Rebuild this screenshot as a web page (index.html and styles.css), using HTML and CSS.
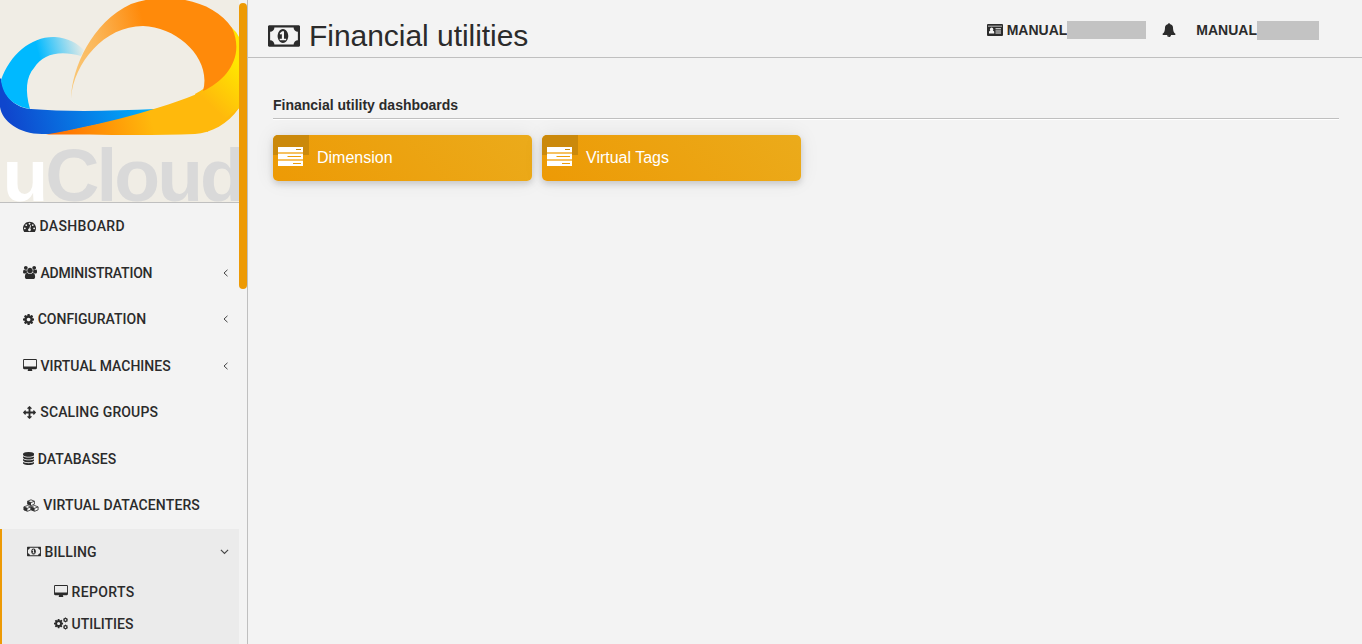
FILE: index.html
```html
<!DOCTYPE html>
<html lang="en">
<head>
<meta charset="utf-8">
<title>Financial utilities</title>
<link rel="stylesheet" href="styles.css">
</head>
<body>
<svg class="defs" width="0" height="0">
  <symbol id="money" viewBox="0 0 1920 1792"><path d="M704 1152h384v-96h-128v-448h-114l-148 137 77 80q42-37 55-57h2v288h-128v96zm512-256q0 70-21 142t-59.5 134-101.5 101-138 39-138-39-101.5-101-59.5-134-21-142 21-142 59.5-134 101.5-101 138-39 138 39 101.5 101 59.5 134 21 142zm576 256v-512q-106 0-181-75t-75-181h-1152q0 106-75 181t-181 75v512q106 0 181 75t75 181h1152q0-106 75-181t181-75zm128-832v1152q0 26-19 45t-45 19h-1792q-26 0-45-19t-19-45v-1152q0-26 19-45t45-19h1792q26 0 45 19t19 45z"/></symbol>
  <symbol id="desktop" viewBox="0 0 1920 1792"><path d="M1792 992v-832q0-13-9.500-22.500t-22.500-9.500h-1600q-13 0-22.500 9.500t-9.500 22.500v832q0 13 9.500 22.500t22.500 9.500h1600q13 0 22.500-9.500t9.500-22.500zm128-832v1088q0 66-47 113t-113 47h-544q0 37 16 77.500t32 71 16 43.500q0 26-19 45t-45 19h-512q-26 0-45-19t-19-45q0-14 16-44t32-70 16-78h-544q-66 0-113-47t-47-113v-1088q0-66 47-113t113-47h1600q66 0 113 47t47 113z"/></symbol>
  <symbol id="cog" viewBox="128 0 1536 1792"><path d="M1152 896q0-106-75-181t-181-75-181 75-75 181 75 181 181 75 181-75 75-181zm512-109v222q0 12-8 23t-20 13l-185 28q-19 54-39 91 35 50 107 138 10 12 10 25t-9 23q-27 37-99 108t-94 71q-12 0-26-9l-138-108q-44 23-91 38-16 136-29 186-7 28-36 28h-222q-14 0-24.500-8.500t-11.500-21.500l-28-184q-49-16-90-37l-141 107q-10 9-25 9-14 0-25-11-126-114-165-168-7-10-7-23 0-12 8-23 15-21 51-66.500t54-70.500q-27-50-41-99l-183-27q-13-2-21-12.500t-8-23.500v-222q0-12 8-23t19-13l186-28q14-46 39-92-40-57-107-138-10-12-10-24 0-10 9-23 26-36 98.500-107.500t94.500-71.500q13 0 26 10l138 107q44-23 91-38 16-136 29-186 7-28 36-28h222q14 0 24.500 8.500t11.500 21.500l28 184q49 16 90 37l142-107q9-9 24-9 13 0 25 10 129 119 165 170 7 8 7 22 0 12-8 23-15 21-51 66.500t-54 70.500q26 50 41 98l183 28q13 2 21 12.500t8 23.500z"/></symbol>
</svg>
<div class="app">
  <aside class="sidebar">
    <div class="logo">
      <svg width="239" height="202" viewBox="0 0 239 202">
        <defs>
          <linearGradient id="sky" gradientUnits="userSpaceOnUse" x1="40" y1="60" x2="85" y2="48"><stop offset="0" stop-color="#00b9ff"/><stop offset="1" stop-color="#f0ede5"/></linearGradient>
          <linearGradient id="blue" gradientUnits="userSpaceOnUse" x1="10" y1="125" x2="140" y2="95"><stop offset="0" stop-color="#0f46cd"/><stop offset="1" stop-color="#00aafa"/></linearGradient>
          <linearGradient id="orange" gradientUnits="userSpaceOnUse" x1="70" y1="80" x2="152" y2="62"><stop offset="0" stop-color="#f9c878"/><stop offset=".4" stop-color="#fbb75a"/><stop offset="1" stop-color="#ff8a0a"/></linearGradient>
          <linearGradient id="gold" gradientUnits="userSpaceOnUse" x1="50" y1="134" x2="150" y2="112"><stop offset="0" stop-color="#ff6a00"/><stop offset="1" stop-color="#ffb90c"/></linearGradient>
          <linearGradient id="yellow" gradientUnits="userSpaceOnUse" x1="205" y1="100" x2="239" y2="65"><stop offset="0" stop-color="#ffb90c"/><stop offset="1" stop-color="#ffe600"/></linearGradient>
        </defs>
        <path fill="url(#blue)" d="M1 78C4 99 17 108 31 109C66 112 112 111 156 109L160 111L54 134H42C19 134 2 121 0 107V79Z"/>
        <path fill="url(#gold)" d="M46 134.500C100 125 160 110 204 91L239 60V108C228 124 211 133 195 134C150 136 90 134.500 46 134.500Z"/>
        <path fill="url(#yellow)" d="M195 94C222 79 237 60 231 27Q236 31 239 37V108L207 132Z"/>
        <path fill="url(#sky)" d="M1 80C10 54 32 36 55 37C68 38 77 43 84 50L81 56C59 50 43 54 34 68C26 77 25 91 30 109C14 106 3 97 1 80Z"/>
        <path fill="url(#orange)" d="M71 98C72 68 92 22 131 4C167-9 214 0 232 28C245 56 227 80 203 91C212 59 178 27 143 26C104 26 74 63 71 98Z"/>
        <text class="logo-text" x="2.500" y="200.700" fill="#d9d9d9"><tspan fill="#fff">u</tspan>Cloud</text>
      </svg>
    </div>
    <nav class="nav">
      <a class="item"><svg class="ic w13" viewBox="0 0 1792 1792"><path d="M384 1152q0-53-37.500-90.500t-90.500-37.500-90.500 37.500-37.500 90.500 37.500 90.500 90.500 37.500 90.500-37.500 37.500-90.500zm192-448q0-53-37.500-90.500t-90.500-37.500-90.500 37.500-37.500 90.500 37.500 90.500 90.500 37.500 90.500-37.500 37.500-90.500zm428 481l101-382q6-26-7.500-48.500t-38.500-29.500-48 6.500-30 39.500l-101 382q-60 5-107 43.500t-63 98.500q-20 77 20 146t117 89 146-20 89-117q16-60-6-117t-72-91zm660-33q0-53-37.500-90.500t-90.500-37.500-90.500 37.500-37.500 90.500 37.500 90.500 90.500 37.500 90.500-37.500 37.500-90.500zm-640-640q0-53-37.500-90.500t-90.500-37.500-90.500 37.500-37.500 90.500 37.500 90.500 90.500 37.500 90.500-37.500 37.500-90.500zm448 192q0-53-37.500-90.500t-90.500-37.500-90.500 37.500-37.500 90.500 37.500 90.500 90.500 37.500 90.500-37.500 37.500-90.500zm320 448q0 261-141 483-19 29-54 29h-1402q-35 0-54-29-141-221-141-483 0-182 71-348t191-286 286-191 348-71 348 71 286 191 191 286 71 348z"/></svg><span class="wide">DASHBOARD</span></a>
      <a class="item"><svg class="ic w14" viewBox="0 0 1920 1792"><path d="M593 896q-162 5-265 128h-134q-82 0-138-40.500t-56-118.500q0-353 124-353 6 0 43.500 21t97.500 42.500 119 21.500q67 0 133-23-5 37-5 66 0 159 93 287zm1071 637q0 120-73 189.500t-194 69.500h-874q-121 0-194-69.500t-73-189.500q0-53 3.500-103.500t14-109 26.500-108.500 43-97.500 62-81 85.500-53.500 111.500-20q10 0 43 21.500t73 48 107 48 135 21.500 135-21.500 107-48 73-48 43-21.500q61 0 111.500 20t85.500 53.500 62 81 43 97.500 26.500 108.500 14 109 3.500 103.500zm-1024-1277q0 106-75 181t-181 75-181-75-75-181 75-181 181-75 181 75 75 181zm704 384q0 159-112.500 271.500t-271.500 112.500-271.500-112.500-112.500-271.500 112.500-271.500 271.500-112.500 271.500 112.500 112.500 271.500zm576 225q0 78-56 118.500t-138 40.500h-134q-103-123-265-128 93-128 93-287 0-29-5-66 66 23 133 23 59 0 119-21.500t97.500-42.500 43.500-21q124 0 124 353zm-128-609q0 106-75 181t-181 75-181-75-75-181 75-181 181-75 181 75 75 181z"/></svg><span class="tight">ADMINISTRATION</span><svg class="chev" viewBox="0 0 8 8"><path d="M5.500 .8L2 4l3.500 3.200"/></svg></a>
      <a class="item"><svg class="ic w11"><use href="#cog"/></svg><span>CONFIGURATION</span><svg class="chev" viewBox="0 0 8 8"><path d="M5.500 .8L2 4l3.500 3.200"/></svg></a>
      <a class="item"><svg class="ic w14"><use href="#desktop"/></svg><span>VIRTUAL MACHINES</span><svg class="chev" viewBox="0 0 8 8"><path d="M5.500 .8L2 4l3.500 3.200"/></svg></a>
      <a class="item"><svg class="ic w13" viewBox="0 0 1792 1792"><path d="M1792 896q0 26-19 45l-256 256q-19 19-45 19t-45-19-19-45v-128h-384v384h128q26 0 45 19t19 45-19 45l-256 256q-19 19-45 19t-45-19l-256-256q-19-19-19-45t19-45 45-19h128v-384h-384v128q0 26-19 45t-45 19-45-19l-256-256q-19-19-19-45t19-45l256-256q19-19 45-19t45 19 19 45v128h384v-384h-128q-26 0-45-19t-19-45 19-45l256-256q19-19 45-19t45 19l256 256q19 19 19 45t-19 45-45 19h-128v384h384v-128q0-26 19-45t45-19 45 19l256 256q19 19 19 45z"/></svg><span class="loose shifted">SCALING GROUPS</span></a>
      <a class="item"><svg class="ic w11" viewBox="128 0 1536 1792"><path d="M896 768q237 0 443-43t325-127v170q0 69-103 128t-280 93.500-385 34.500-385-34.500-280-93.500-103-128v-170q119 84 325 127t443 43zm0 768q237 0 443-43t325-127v170q0 69-103 128t-280 93.500-385 34.500-385-34.500-280-93.500-103-128v-170q119 84 325 127t443 43zm0-384q237 0 443-43t325-127v170q0 69-103 128t-280 93.500-385 34.500-385-34.500-280-93.500-103-128v-170q119 84 325 127t443 43zm0-1152q208 0 385 34.500t280 93.500 103 128v128q0 69-103 128t-280 93.500-385 34.500-385-34.500-280-93.500-103-128v-128q0-69 103-128t280-93.500 385-34.500z"/></svg><span class="loose">DATABASES</span></a>
      <a class="item"><svg class="ic w16" viewBox="0 0 16 13">
        <path class="line" d="M4.600 2.200L8 .8l3.400 1.400v3L8 6.600 4.600 5.200ZM4.600 2.200L8 3.600l3.400-1.400M.9 7.900l3.500-1.400 3.500 1.400v3l-3.500 1.400L.9 10.900ZM.9 7.900l3.500 1.400 3.500-1.400M8.100 7.900l3.500-1.400 3.500 1.400v3l-3.500 1.400-3.500-1.400ZM8.100 7.900l3.500 1.400 3.500-1.400"/>
        <path d="M4.600 2.200L8 3.600v3L4.600 5.200ZM.9 7.900l3.500 1.400v3L.9 10.900ZM8.100 7.900l3.500 1.400v3l-3.500-1.400Z"/></svg><span class="loose shifted">VIRTUAL DATACENTERS</span></a>
      <div class="group">
        <a class="item"><svg class="ic w14"><use href="#money"/></svg><span class="loose">BILLING</span><svg class="chev down" viewBox="0 0 8 8"><path d="M.8 2.500L4 5.700l3.200-3.200"/></svg></a>
        <a class="sub"><svg class="ic w14"><use href="#desktop"/></svg><span class="wide">REPORTS</span></a>
        <a class="sub"><svg class="ic w14" viewBox="0 0 14 13"><use href="#cog" x="0" y="1.200" width="9.200" height="10.700"/><use href="#cog" x="9" y="0" width="5" height="5.800"/><use href="#cog" x="9" y="7.200" width="5" height="5.800"/></svg><span>UTILITIES</span></a>
      </div>
    </nav>
    <div class="scrollbar"></div>
  </aside>
  <main class="main">
    <header class="header">
      <h1 class="title"><svg class="title-icon"><use href="#money"/></svg><span>Financial utilities</span></h1>
      <div class="account">
        <svg class="card-icon" viewBox="0 0 16 12"><path fill-rule="evenodd" d="M1 0H15a1 1 0 0 1 1 1V11a1 1 0 0 1-1 1H1a1 1 0 0 1-1-1V1a1 1 0 0 1 1-1ZM1 1.700V2.500H15V1.700ZM2 9.500H7.200V8Q7 6.700 5.900 6.700A1.700 1.900 0 1 0 3.300 6.700Q2 6.700 2 8ZM8.500 4.300V5.300H14V4.300ZM8.500 6.400V7.400H14V6.400ZM8.500 8.500V9.500H14V8.500Z"/></svg>
        <span class="name">MANUAL</span><i class="mask first"></i>
        <svg class="bell" viewBox="0 0 1792 1792"><path d="M912 1696q0-16-16-16-59 0-101.500-42.500t-42.500-101.500q0-16-16-16t-16 16q0 73 51.500 124.500t124.500 51.500q16 0 16-16zm816-288q0 52-38 90t-90 38h-448q0 106-75 181t-181 75-181-75-75-181h-448q-52 0-90-38t-38-90q50-42 91-88t85-119.500 74.500-158.500 50-206 19.500-260q0-152 117-282.500t307-158.500q-8-19-8-39 0-40 28-68t68-28 68 28 28 68q0 20-8 39 190 28 307 158.500t117 282.500q0 139 19.500 260t50 206 74.500 158.500 85 119.500 91 88z"/></svg>
        <span class="name">MANUAL</span><i class="mask second"></i>
      </div>
    </header>
    <section class="content">
      <h2 class="heading">Financial utility dashboards</h2>
      <div class="cards">
        <a class="tile"><span class="tile-icon"><svg viewBox="0 0 25 19"><path fill-rule="evenodd" d="M0 0H25V5H0ZM18 2V3H23V2ZM0 7H25V12H0ZM9.500 9V10H23V9ZM0 14H25V19H0ZM15 16V17H23V16Z"/><path class="gap" d="M0 5H25V7H0ZM0 12H25V14H0Z"/></svg></span><span class="tile-label">Dimension</span></a>
        <a class="tile"><span class="tile-icon"><svg viewBox="0 0 25 19"><path fill-rule="evenodd" d="M0 0H25V5H0ZM18 2V3H23V2ZM0 7H25V12H0ZM9.500 9V10H23V9ZM0 14H25V19H0ZM15 16V17H23V16Z"/><path class="gap" d="M0 5H25V7H0ZM0 12H25V14H0Z"/></svg></span><span class="tile-label">Virtual Tags</span></a>
      </div>
    </section>
  </main>
</div>
</body>
</html>
```
FILE: styles.css
```css
* { box-sizing: border-box; }
body { margin: 0; background: #f3f3f3; color: #2b2b2b; font-family: "Liberation Sans", Arial, sans-serif; overflow: hidden; }
svg { display: block; flex: none; fill: currentColor; }
.defs { position: absolute; }
.app { display: flex; height: 644px; }
.sidebar { position: relative; width: 248px; flex: none; border-right: 1px solid #bfbfbf; overflow: hidden; }
.logo { width: 239px; height: 203px; background: #f0ede5; border-bottom: 1px solid #bfbfbf; }
.logo-text { font: bold 75px "Liberation Sans", Arial, sans-serif; letter-spacing: -3px; }
.scrollbar { position: absolute; right: 0; top: 3px; width: 8px; height: 286px; border-radius: 4px; background: #ed9a05; }
.nav { width: 239px; font: 500 14px/20px Roboto, sans-serif; }
.item { display: flex; align-items: center; height: 46.5px; padding: 0 9px 0 23px; }
.item span, .sub span { margin-left: 3.500px; }
.item .shifted { margin-left: 4.300px; }
.wide { letter-spacing: .35px; }
.loose { letter-spacing: .13px; }
.tight { letter-spacing: -.22px; }
.ic { height: 13px; }
.w11 { width: 11.200px; }
.w13 { width: 13px; }
.w14 { width: 14px; }
.w16 { width: 16px; }
.line { fill: none; stroke: currentColor; stroke-width: .8; stroke-linejoin: round; }
.chev { width: 8px; height: 8px; margin-left: auto; fill: none; stroke: #444; stroke-width: 1; }
.down { width: 9px; height: 9px; }
.group { height: 116px; background: #ebebeb; border-left: 2px solid #ed9a05; }
.group .item { height: 46px; padding-left: 25px; padding-right: 10px; }
.sub { display: flex; align-items: center; height: 32px; padding: 2px 0 0 52px; }
.main { flex: 1; min-width: 0; }
.header { display: flex; justify-content: space-between; height: 58px; border-bottom: 1px solid #bfbfbf; padding: 0 43px 0 20px; }
.title { display: flex; align-items: center; gap: 9px; margin: 0; padding-top: 15px; font-size: 30px; font-weight: 400; line-height: 44px; letter-spacing: -.04px; }
.title-icon { width: 32px; height: 30px; }
.account { display: flex; align-items: center; height: 60px; font-size: 14px; font-weight: 700; }
.card-icon { width: 16px; height: 12px; margin-right: 4px; }
.mask { background: #c3c3c3; }
.first { width: 79px; height: 18px; margin-right: 16px; }
.second { width: 62px; height: 19px; }
.bell { width: 14px; height: 14px; margin-right: 20px; }
.content { padding: 38px 23px 0 25px; }
.heading { margin: 0; height: 23px; border-bottom: 1px solid #bfbfbf; box-shadow: 0 1px 0 #fff; font-size: 14px; line-height: 18px; }
.cards { display: flex; gap: 10px; padding-top: 16px; }
.tile { display: flex; width: 259px; height: 46px; border-radius: 5px; overflow: hidden; background: linear-gradient(45deg, #ed9a05, #ebab1b); box-shadow: 0 3px 6px rgba(0,0,0,.15), 0 0 20px rgba(0,0,0,.08); color: #fff; }
.tile-icon { width: 36px; height: 20px; padding: 12px 0 0 5px; background: #cb890b; }
.tile-icon svg { width: 25px; height: 19px; }
.gap { fill: #f6c160; }
.tile-label { margin-left: 8px; font-size: 16px; line-height: 45px; }
```
